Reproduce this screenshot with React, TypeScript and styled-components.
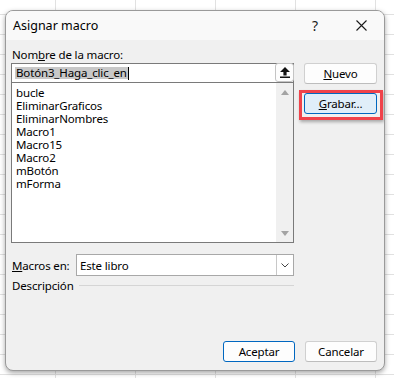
import styled, { createGlobalStyle } from 'styled-components';

const GlobalStyle = createGlobalStyle`
    html, body {
        margin: 0;
        padding: 0;
    }
    body {
        width: 394px;
        height: 378px;
        overflow: hidden;
        font-family: 'Noto Sans', 'Open Sans', sans-serif;
        font-size: 11px;
        letter-spacing: -0.15px;
        color: #000;
        background-color: #fff;
        background-image:
            linear-gradient(to right, #e1e1e1 1px, transparent 1px),
            linear-gradient(to bottom, #e1e1e1 1px, transparent 1px);
        background-size: 80px 20px;
        background-position: 55px 14px;
    }
`;

const macros = [
    'bucle',
    'EliminarGraficos',
    'EliminarNombres',
    'Macro1',
    'Macro15',
    'Macro2',
    'mBotón',
    'mForma',
];

const App = () => {
    return (
        <>
            <GlobalStyle />
            <Desktop>
                <Dialog>
                    <TitleBar>
                        <Title>Asignar macro</Title>
                        <TitleButton>?</TitleButton>
                        <TitleButton>
                            <svg width='11' height='11' viewBox='0 0 11 11'>
                                <path
                                    d='M0.5 0.5 L10.5 10.5 M10.5 0.5 L0.5 10.5'
                                    stroke='#1a1a1a'
                                    strokeWidth='1.1'
                                />
                            </svg>
                        </TitleButton>
                    </TitleBar>
                    <Body>
                        <TopRow>
                            <MainCol>
                                <Label>
                                    Nom<u>b</u>re de la macro:
                                </Label>
                                <NameInput>
                                    <Selected>Botón3_Haga_clic_en</Selected>
                                    <Caret />
                                    <Filler />
                                    <CollapseButton>
                                        <svg width='10' height='11' viewBox='0 0 10 11'>
                                            <path d='M5 0 L10 5 H6.6 V8.5 H3.4 V5 H0 Z' fill='#111' />
                                            <rect x='0' y='9.5' width='10' height='1.5' fill='#111' />
                                        </svg>
                                    </CollapseButton>
                                </NameInput>
                                <MacroList>
                                    <Items>
                                        {macros.map((m) => (
                                            <Item key={m}>{m}</Item>
                                        ))}
                                    </Items>
                                    <ScrollBar>
                                        <Arrow $up />
                                        <Arrow />
                                    </ScrollBar>
                                </MacroList>
                            </MainCol>
                            <SideCol>
                                <Button>
                                    <u>N</u>uevo
                                </Button>
                                <Highlighted>
                                    <Button $primary>
                                        <u>G</u>rabar...
                                    </Button>
                                    <RedFrame />
                                </Highlighted>
                            </SideCol>
                        </TopRow>
                        <FieldRow>
                            <RowLabel>
                                <u>M</u>acros en:
                            </RowLabel>
                            <Select>
                                <SelectText>Este libro</SelectText>
                                <SelectArrow>
                                    <svg width='8' height='5' viewBox='0 0 8 5'>
                                        <path
                                            d='M0.5 0.5 L4 4 L7.5 0.5'
                                            stroke='#444'
                                            strokeWidth='1'
                                            fill='none'
                                        />
                                    </svg>
                                </SelectArrow>
                            </Select>
                        </FieldRow>
                        <GroupRow>
                            <span>Descripción</span>
                            <Rule />
                        </GroupRow>
                        <Spacer />
                        <Footer>
                            <Button $default>Aceptar</Button>
                            <Button>Cancelar</Button>
                        </Footer>
                    </Body>
                </Dialog>
            </Desktop>
        </>
    );
};

const Desktop = styled.div`
    padding: 10px 0 0 5px;
`;

const Dialog = styled.div`
    width: 380px;
    height: 361px;
    box-sizing: border-box;
    border: 1px solid #9a9a9a;
    border-radius: 8px;
    background: #f0f0f0;
    box-shadow: 0 2px 5px rgba(0, 0, 0, 0.35);
    display: flex;
    flex-direction: column;
    overflow: hidden;
`;

const TitleBar = styled.div`
    height: 29px;
    background: #f9f9f9;
    display: flex;
    align-items: center;
    padding-left: 7px;
`;

const Title = styled.div`
    flex: 1;
    font-size: 12.5px;
    letter-spacing: 0;
`;

const TitleButton = styled.div`
    width: 46px;
    height: 29px;
    display: flex;
    align-items: center;
    justify-content: center;
    font-size: 14px;
    color: #1a1a1a;
`;

const Body = styled.div`
    flex: 1;
    display: flex;
    flex-direction: column;
    padding: 8px 7px 8px 5px;
`;

const TopRow = styled.div`
    display: flex;
    gap: 10px;
`;

const MainCol = styled.div`
    width: 283px;
    display: flex;
    flex-direction: column;
`;

const Label = styled.div`
    height: 15px;
    line-height: 13px;
    padding-left: 1px;
    font-size: 11.5px;
`;

const NameInput = styled.div`
    height: 20px;
    box-sizing: border-box;
    border: 1px solid #7a7a7a;
    background: #fff;
    display: flex;
    align-items: center;
    padding-left: 3px;
`;

const Selected = styled.span`
    background: #c8c8c8;
    line-height: 12px;
    padding: 0 1px;
    font-size: 11.5px;
`;

const Caret = styled.span`
    width: 1px;
    height: 13px;
    background: #000;
`;

const Filler = styled.span`
    flex: 1;
`;

const CollapseButton = styled.div`
    width: 19px;
    height: 19px;
    margin: -1px -1px 0 0;
    box-sizing: border-box;
    border: 1px solid #c4c4c4;
    border-radius: 3px;
    background: #fdfdfd;
    display: flex;
    align-items: center;
    justify-content: center;
`;

const MacroList = styled.div`
    height: 160px;
    box-sizing: border-box;
    border: 1px solid #7a7a7a;
    border-top: none;
    background: #fff;
    display: flex;
`;

const Items = styled.ul`
    flex: 1;
    list-style: none;
    margin: 0;
    padding: 3px 0 0 4px;
`;

const Item = styled.li`
    line-height: 13px;
    font-size: 11.5px;
`;

const ScrollBar = styled.div`
    width: 17px;
    background: #f0f0f0;
    display: flex;
    flex-direction: column;
    justify-content: space-between;
    align-items: center;
    padding: 7px 0 6px;
`;

const Arrow = styled.div<{ $up?: boolean }>`
    width: 0;
    height: 0;
    border-left: 4px solid transparent;
    border-right: 4px solid transparent;
    ${({ $up }) =>
        $up ? 'border-bottom: 5px solid #a3a3a3;' : 'border-top: 5px solid #a3a3a3;'}
`;

const SideCol = styled.div`
    width: 73px;
    padding-top: 15px;
    display: flex;
    flex-direction: column;
    gap: 9px;
`;

const Button = styled.div<{ $primary?: boolean; $default?: boolean }>`
    width: 73px;
    height: 21px;
    box-sizing: border-box;
    border-radius: 3px;
    display: flex;
    align-items: center;
    justify-content: center;
    font-size: 11.5px;
    border: 1px solid ${({ $primary, $default }) => ($primary || $default ? '#0067c0' : '#d0d0d0')};
    border-bottom-color: ${({ $primary, $default }) => ($primary || $default ? '#0067c0' : '#bdbdbd')};
    background: ${({ $primary }) => ($primary ? '#e0eef9' : '#fdfdfd')};
`;

const Highlighted = styled.div`
    position: relative;
`;

const RedFrame = styled.div`
    position: absolute;
    left: -5px;
    top: -3px;
    right: -6px;
    bottom: -6px;
    border: 3px solid #f0424a;
    box-shadow: 1px 2px 3px rgba(0, 0, 0, 0.3);
`;

const FieldRow = styled.div`
    margin-top: 11px;
    display: flex;
    align-items: center;
    width: 283px;
    font-size: 11.5px;
`;

const RowLabel = styled.div`
    width: 64px;
    padding-left: 1px;
`;

const Select = styled.div`
    flex: 1;
    height: 22px;
    box-sizing: border-box;
    border: 1px solid #a8a8a8;
    background: #fff;
    display: flex;
`;

const SelectText = styled.div`
    flex: 1;
    display: flex;
    align-items: center;
    padding-left: 3px;
`;

const SelectArrow = styled.div`
    width: 16px;
    border-left: 1px solid #c8c8c8;
    display: flex;
    align-items: center;
    justify-content: center;
`;

const GroupRow = styled.div`
    width: 283px;
    margin-top: 2px;
    padding-left: 1px;
    box-sizing: border-box;
    display: flex;
    align-items: center;
    gap: 5px;
    font-size: 11.5px;
`;

const Rule = styled.div`
    flex: 1;
    height: 1px;
    background: #d5d5d5;
`;

const Spacer = styled.div`
    flex: 1;
`;

const Footer = styled.div`
    display: flex;
    justify-content: flex-end;
    gap: 10px;
    ${Button} {
        width: 72px;
    }
`;

export default App;
